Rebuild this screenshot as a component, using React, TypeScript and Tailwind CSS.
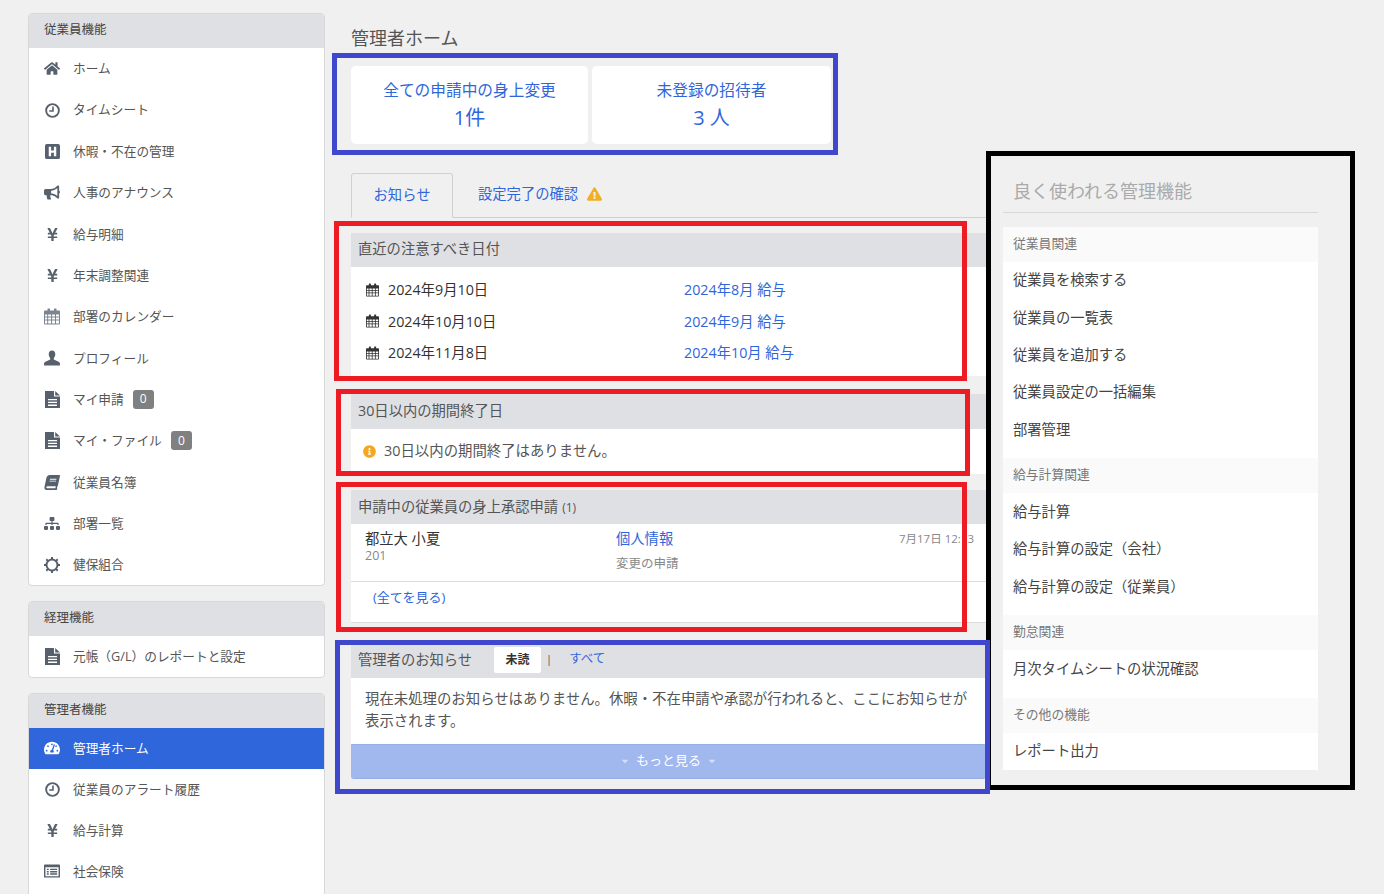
import type { ReactNode } from "react";
import {
  FaBook,
  FaBullhorn,
  FaCaretDown,
  FaExclamationTriangle,
  FaHome,
  FaInfoCircle,
  FaSitemap,
  FaTachometerAlt,
  FaYenSign,
} from "react-icons/fa";

const CalendarGrid = ({ className }: { className?: string }) => (
  <svg viewBox="0 0 16 16" className={className} fill="currentColor">
    <path d="M4 0h1.5a.5.5 0 0 1 .5.5V2h4V.5a.5.5 0 0 1 .5-.5H12a.5.5 0 0 1 .5.5V2H15a1 1 0 0 1 1 1v12a1 1 0 0 1-1 1H1a1 1 0 0 1-1-1V3a1 1 0 0 1 1-1h2.5V.5A.5.5 0 0 1 4 0zM1 6v2h2.2V6H1zm3.2 0v2h2.9V6H4.200zm3.900 0v2H11V6H8.100zM12 6v2h3V6h-3zM1 9v2h2.200V9H1zm3.200 0v2h2.900V9H4.200zm3.900 0v2H11V9H8.100zM12 9v2h3V9h-3zM1 12v3h2.200v-3H1zm3.200 0v3h2.900v-3H4.200zm3.900 0v3H11v-3H8.100zM12 12v3h3v-3h-3z" fillRule="evenodd" />
  </svg>
);

const ClockIcon = () => (
  <svg viewBox="0 0 16 16" className="w-[15px] h-[15px]" fill="none" stroke="currentColor">
    <circle cx="8" cy="8" r="6.800" strokeWidth="2" />
    <path d="M8.500 3.800v4.700H4.500" strokeWidth="1.700" />
  </svg>
);

const HSquareIcon = () => (
  <svg viewBox="0 0 16 16" className="w-[15px] h-[15px]" fill="currentColor">
    <path fillRule="evenodd" d="M2 0h12a2 2 0 0 1 2 2v12a2 2 0 0 1-2 2H2a2 2 0 0 1-2-2V2a2 2 0 0 1 2-2zm2 3v10h2.500V9.300h3V13H12V3H9.500v3.800h-3V3H4z" />
  </svg>
);

const FileIcon = () => (
  <svg viewBox="0 0 15 17" className="w-[15px] h-[17px]" fill="currentColor">
    <path fillRule="evenodd" d="M0 0h9v5.500h6V17H0V0zm3 8v1.300h9V8H3zm0 2.800v1.300h9v-1.300H3zm0 2.800v1.300h9v-1.300H3z" />
    <path d="M10.200 0 15 4.500h-4.800z" />
  </svg>
);

const UserIcon = () => (
  <svg viewBox="0 0 17 16" className="w-[17px] h-[16px]" fill="currentColor">
    <path d="M8.500 0C6.300 0 5 1.600 5 3.800c0 1.800.7 3.400 1.600 4.400v1.400L1.500 12C.5 12.500 0 13.300 0 14.500V16h17v-1.500c0-1.200-.5-2-1.500-2.500l-5.100-2.400V8.200c.9-1 1.600-2.600 1.600-4.400C12 1.600 10.700 0 8.500 0z" />
  </svg>
);

const GearRingIcon = () => (
  <svg viewBox="0 0 16 16" className="w-[16px] h-[16px]" fill="none" stroke="currentColor">
    <circle cx="8" cy="8" r="5.500" strokeWidth="2" />
    <path
      strokeWidth="2"
      d="M8 0v2.500M8 13.500V16M0 8h2.500M13.500 8H16M2.300 2.300l1.800 1.800M11.900 11.900l1.800 1.800M2.300 13.700l1.800-1.800M11.900 4.100l1.800-1.800"
    />
  </svg>
);

const ListIcon = () => (
  <svg viewBox="0 0 17 14" className="w-[17px] h-[14px]" fill="currentColor">
    <path fillRule="evenodd" d="M1 0h15a1 1 0 0 1 1 1v12a1 1 0 0 1-1 1H1a1 1 0 0 1-1-1V1a1 1 0 0 1 1-1zm.500 3v9.500h14V3h-14zM3 4.500h2v1.500H3zm3.500 0H14v1.500H6.500zM3 7h2v1.500H3zm3.500 0H14v1.500H6.500zM3 9.500h2V11H3zm3.500 0H14V11H6.500z" />
  </svg>
);

type NavEntry = { label: string; icon: ReactNode; badge?: string; active?: boolean };

const yen = <FaYenSign className="w-[13px] h-[15px]" />;

const employeeNav: NavEntry[] = [
  { label: "ホーム", icon: <FaHome className="w-[16px] h-[15px]" /> },
  { label: "タイムシート", icon: <ClockIcon /> },
  { label: "休暇・不在の管理", icon: <HSquareIcon /> },
  { label: "人事のアナウンス", icon: <FaBullhorn className="w-[17px] h-[15px]" /> },
  { label: "給与明細", icon: yen },
  { label: "年末調整関連", icon: yen },
  { label: "部署のカレンダー", icon: <CalendarGrid className="w-[16px] h-[17px] text-[#7b8590]" /> },
  { label: "プロフィール", icon: <UserIcon /> },
  { label: "マイ申請", icon: <FileIcon />, badge: "0" },
  { label: "マイ・ファイル", icon: <FileIcon />, badge: "0" },
  { label: "従業員名簿", icon: <FaBook className="w-[16px] h-[15px] -skew-x-12" /> },
  { label: "部署一覧", icon: <FaSitemap className="w-[17px] h-[15px]" /> },
  { label: "健保組合", icon: <GearRingIcon /> },
];

const adminNav: NavEntry[] = [
  { label: "管理者ホーム", icon: <FaTachometerAlt className="w-[18px] h-[16px]" />, active: true },
  { label: "従業員のアラート履歴", icon: <ClockIcon /> },
  { label: "給与計算", icon: yen },
  { label: "社会保険", icon: <ListIcon /> },
];

const NavCard = ({
  title,
  items,
  rowClass,
  bleed,
}: {
  title: string;
  items: NavEntry[];
  rowClass: string;
  bleed?: boolean;
}) => (
  <div className={`bg-white border border-[#d8d8d8] rounded-[4px] overflow-hidden ${bleed ? "pb-[60px]" : ""}`}>
    <div className="h-[34px] bg-[#dfe0e4] pl-[15px] pb-px flex items-center text-[12.5px] text-[#444]">{title}</div>
    {items.map((item) => (
      <div
        key={item.label}
        className={`${rowClass} pl-[15px] flex items-center text-[12.7px] ${
          item.active ? "bg-[#2f66db] text-white" : "text-[#555]"
        }`}
      >
        <span className={`w-[16px] flex justify-center ${item.active ? "text-white" : "text-[#56616d]"}`}>{item.icon}</span>
        <span className="ml-[13px]">{item.label}</span>
        {item.badge && (
          <span className="ml-[9px] w-[21px] h-[19px] rounded-[3px] bg-[#808080] text-white text-[12px] flex items-center justify-center">
            {item.badge}
          </span>
        )}
      </div>
    ))}
  </div>
);

const deadlines = [
  { date: "2024年9月10日", link: "2024年8月 給与" },
  { date: "2024年10月10日", link: "2024年9月 給与" },
  { date: "2024年11月8日", link: "2024年10月 給与" },
];

const groups = [
  { title: "従業員関連", items: ["従業員を検索する", "従業員の一覧表", "従業員を追加する", "従業員設定の一括編集", "部署管理"] },
  { title: "給与計算関連", items: ["給与計算", "給与計算の設定（会社）", "給与計算の設定（従業員）"] },
  { title: "勤怠関連", items: ["月次タイムシートの状況確認"] },
  { title: "その他の機能", items: ["レポート出力"] },
];

const App = () => {
  return (
    <div className="relative w-[1384px] h-[894px] overflow-hidden bg-[#f0f0f0] flex items-start font-['Open_Sans','Noto_Sans_CJK_JP',sans-serif]">
      {/* sidebar */}
      <aside className="ml-[28px] mt-[13px] w-[297px] flex flex-col gap-[14.700px] shrink-0">
        <NavCard title="従業員機能" items={employeeNav} rowClass="h-[41.350px]" />
        <NavCard
          title="経理機能"
          items={[{ label: "元帳（G/L）のレポートと設定", icon: <FileIcon /> }]}
          rowClass="h-[41px]"
        />
        <NavCard title="管理者機能" items={adminNav} rowClass="h-[41px]" bleed />
      </aside>

      {/* main */}
      <main className="ml-[26px] w-[635px] shrink-0 pt-[26px]">
        <h1 className="h-[24px] leading-[24px] text-[18px] text-[#555]">管理者ホーム</h1>

        <div className="mt-[16px] flex gap-[4px] w-[480px] text-[#2f66db] text-center">
          <div className="w-[237px] h-[78px] bg-white rounded-[5px] pt-[12px]">
            <div className="text-[15.700px] leading-[24px]">全ての申請中の身上変更</div>
            <div className="text-[20px] leading-[30px] mt-[1px]">1件</div>
          </div>
          <div className="w-[239px] h-[78px] bg-white rounded-[5px] pt-[12px]">
            <div className="text-[15.700px] leading-[24px]">未登録の招待者</div>
            <div className="text-[20px] leading-[30px] mt-[1px]">3 人</div>
          </div>
        </div>

        <div className="mt-[29px] h-[45px] flex items-end border-b border-[#d0d0d0] text-[14.300px] text-[#2f66db]">
          <div className="w-[102px] h-[45px] -mb-px pb-[2px] border border-[#d0d0d0] border-b-[#f0f0f0] rounded-t-[3px] flex items-center justify-center">
            お知らせ
          </div>
          <div className="h-[44px] pb-[2px] ml-[25px] flex items-center gap-[9px]">
            設定完了の確認
            <FaExclamationTriangle className="w-[15px] h-[14px] text-[#efb025]" />
          </div>
        </div>

        <section className="mt-[15px] bg-white">
          <div className="h-[34px] bg-[#dfe0e4] pl-[7px] pb-[3px] flex items-center text-[14.300px] text-[#555]">
            直近の注意すべき日付
          </div>
          <div className="h-[109px] pt-[7px] pl-[15px] text-[14.300px]">
            {deadlines.map((row) => (
              <div key={row.date} className="h-[31.500px] flex items-center">
                <CalendarGrid className="w-[13px] h-[14px] text-[#333]" />
                <span className="ml-[9px] w-[296px] text-[#333]">{row.date}</span>
                <span className="text-[#2f66db]">{row.link}</span>
              </div>
            ))}
          </div>
        </section>

        <section className="mt-[18px] bg-white">
          <div className="h-[35px] bg-[#dfe0e4] pl-[7px] pb-[1px] flex items-center text-[14.300px] text-[#555]">
            30日以内の期間終了日
          </div>
          <div className="h-[45px] pl-[12px] pb-[1px] flex items-center gap-[8px] text-[14.400px] text-[#555]">
            <FaInfoCircle className="w-[13px] h-[13px] text-[#f5a623]" />
            30日以内の期間終了はありません。
          </div>
        </section>

        <section className="mt-[16px] bg-white border-b border-[#dcdcdc]">
          <div className="h-[34px] bg-[#dfe0e4] pl-[7px] flex items-center text-[14.300px] text-[#555]">
            <span>
              申請中の従業員の身上承認申請<span className="ml-[4px] text-[12px]">(1)</span>
            </span>
          </div>
          <div className="h-[58px] pl-[14px] pr-[12px] flex border-b border-[#dcdcdc]">
            <div className="w-[251px] pt-[5px]">
              <div className="text-[14.300px] leading-[20px] text-[#333]">都立大 小夏</div>
              <div className="text-[12.500px] leading-[14px] mt-0 text-[#888]">201</div>
            </div>
            <div className="flex-1 pt-[5px]">
              <div className="text-[14.300px] leading-[20px] text-[#2f66db]">個人情報</div>
              <div className="text-[12.500px] leading-[16px] mt-[7px] text-[#888]">変更の申請</div>
            </div>
            <div className="pt-[6px] text-[11.500px] leading-[18px] text-[#888]">7月17日 12:13</div>
          </div>
          <div className="h-[40px] pl-[22px] pt-[5px] text-[13px] leading-[20px] text-[#2f66db]">(全てを見る)</div>
        </section>

        <section className="mt-[17px]">
          <div className="h-[38px] bg-[#dfe0e4] pl-[7px] pt-px flex items-center text-[14.300px] text-[#555]">
            管理者のお知らせ
            <span className="ml-[22px] w-[47px] h-[26px] rounded-[2px] bg-white text-[12px] font-bold text-[#333] flex items-center justify-center">
              未読
            </span>
            <span className="ml-[5px] text-[11px] text-[#555]">|</span>
            <span className="ml-[17px] text-[12.500px] text-[#2f66db]">すべて</span>
          </div>
          <div className="h-[66px] bg-white pl-[14px] pr-[15px] pt-[10px] text-[14.400px] leading-[22px] text-[#555]">
            現在未処理のお知らせはありません。休暇・不在申請や承認が行われると、ここにお知らせが表示されます。
          </div>
          <div className="h-[35px] bg-[#a1b8ef] border-y border-[#97aee4] rounded-b-[3px] pb-px flex items-center justify-center gap-[6px] text-[13px] text-white">
            <FaCaretDown className="w-[10px] h-[10px] text-[#d4def6]" />
            もっと見る
            <FaCaretDown className="w-[10px] h-[10px] text-[#d4def6]" />
          </div>
        </section>
      </main>

      {/* frequently used admin functions */}
      <div className="mt-[151px] w-[369px] h-[639px] shrink-0 border-[5px] border-black pl-[12px] pr-[32px]">
        <h2 className="h-[57px] pl-[10px] pt-[21px] border-b border-[#d8d8d8] text-[18px] leading-[28px] text-[#aaa]">
          良く使われる管理機能
        </h2>
        <div className="mt-[14px] bg-white">
          {groups.map((group, i) => (
            <div key={group.title} className={i < groups.length - 1 ? "pb-[10px]" : ""}>
              <div className="h-[35px] bg-[#fafafa] pl-[10px] pb-[2px] flex items-center text-[12.800px] text-[#777]">{group.title}</div>
              {group.items.map((item) => (
                <div key={item} className="h-[37.300px] pl-[10px] pb-[1px] flex items-center text-[14.300px] text-[#444]">
                  {item}
                </div>
              ))}
            </div>
          ))}
        </div>
      </div>

      {/* highlight frames drawn over the screenshot */}
      <div className="absolute left-[332px] top-[53px] w-[506px] h-[102px] border-[5px] border-[#3f48cc] pointer-events-none" />
      <div className="absolute left-[334px] top-[221px] w-[633px] h-[160px] border-[5px] border-[#ed1c24] pointer-events-none" />
      <div className="absolute left-[336px] top-[389px] w-[634px] h-[87px] border-[5px] border-[#ed1c24] pointer-events-none" />
      <div className="absolute left-[336px] top-[482px] w-[631px] h-[150px] border-[5px] border-[#ed1c24] pointer-events-none" />
      <div className="absolute left-[335px] top-[640px] w-[655px] h-[154px] border-[5px] border-[#3f48cc] pointer-events-none" />
    </div>
  );
};

export default App;
